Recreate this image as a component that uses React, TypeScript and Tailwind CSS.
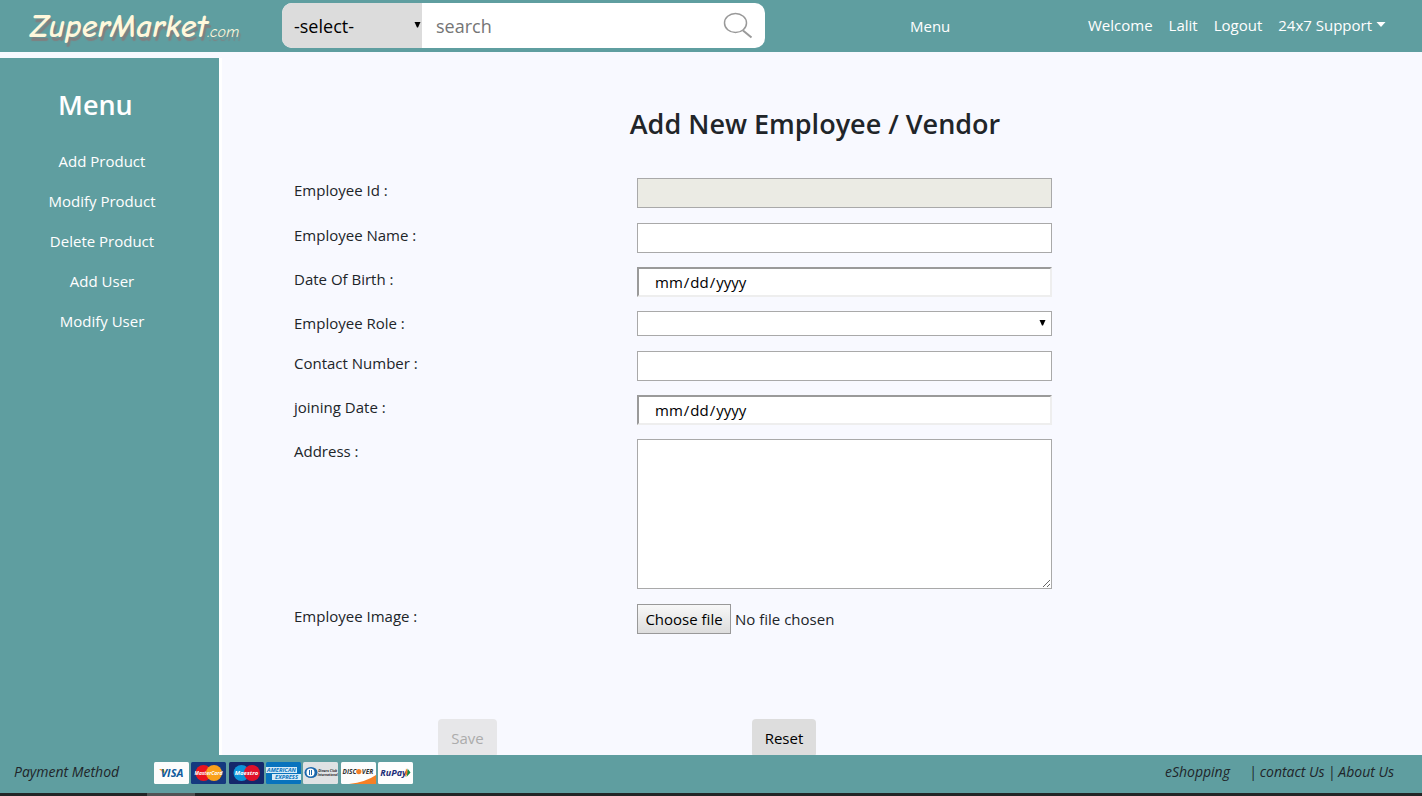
import React from "react";

const adminLinks = ["Add Product", "Modify Product", "Delete Product", "Add User", "Modify User"];
const accountLinks = ["Welcome", "Lalit", "Logout"];

const fieldBox = "w-full border border-[#a9a9a9] bg-white text-black";
const dateBox =
  "h-[30px] w-full border-2 border-t-[#9a9a9a] border-r-[#eeeeee] border-b-[#eeeeee] border-l-[#9a9a9a] bg-white pl-[15px] text-[15px] text-black [&::-webkit-calendar-picker-indicator]:hidden";

function Caret({ className }: { className: string }) {
  return (
    <svg className={className} width="7" height="6" viewBox="0 0 7 6" aria-hidden="true">
      <path d="M0.500 0h6L4 5.500H3z" fill="#000" />
    </svg>
  );
}

function Header() {
  return (
    <header className="flex h-[52px] shrink-0 items-center bg-[#5f9ea0] pr-9 pb-[2px] text-white">
      <a
        href="#"
        className="w-[282px] shrink-0 pt-2 pl-[30px] font-['Comic_Sans_MS','Comic_Neue','Lato',sans-serif] text-[32px] leading-[48px] font-bold whitespace-nowrap text-[#fff8dc] italic [text-shadow:2px_4px_1px_#808080]"
      >
        ZuperMarket<span className="text-[16px] font-normal">.com</span>
      </a>
      <form className="flex h-[45px] w-[483px] shrink-0 overflow-hidden rounded-[10px] bg-white">
        <div className="relative w-[140px]">
          <select
            aria-label="Category"
            className="h-full w-full appearance-none bg-[#dcdcdc] pt-[2px] pl-3 text-[18px] text-black"
          >
            <option>-select-</option>
          </select>
          <Caret className="pointer-events-none absolute top-[19px] right-[1px]" />
        </div>
        <input
          type="text"
          aria-label="Search products"
          placeholder="search"
          className="min-w-0 flex-1 bg-white pt-[2px] pl-[14px] text-[18px] text-black placeholder:text-[#757575]"
        />
        <button type="submit" aria-label="Search" className="flex w-[54px] items-center justify-center">
          <svg width="30" height="28" viewBox="0 0 30 28" fill="none" stroke="#999" aria-hidden="true">
            <ellipse cx="12.5" cy="12" rx="11" ry="9.5" strokeWidth="1.5" />
            <path d="M20 19.5l8.5 7" strokeWidth="2" />
          </svg>
        </button>
      </form>
      <a href="#" className="ml-[145px] pt-[2px] text-[15px]">
        Menu
      </a>
      <nav className="ml-auto flex items-center gap-4 text-[15px] whitespace-nowrap">
        {accountLinks.map((label) => (
          <a key={label} href="#">
            {label}
          </a>
        ))}
        <button type="button" className="flex items-center gap-1">
          24x7 Support
          <svg width="10" height="7" viewBox="0 0 10 7" aria-hidden="true">
            <path d="M0.500 0h9L5 5z" fill="#fff" />
          </svg>
        </button>
      </nav>
    </header>
  );
}

function Sidebar() {
  return (
    <aside className="w-[222px] shrink-0 border-r-3 border-white bg-[#5f9ea0] pt-7 text-white">
      <h2 className="pl-[58px] text-[27px] leading-[38px] font-semibold">Menu</h2>
      <nav className="mt-[17px] flex w-[204px] flex-col items-center text-[15px] leading-10">
        {adminLinks.map((label) => (
          <a key={label} href="#">
            {label}
          </a>
        ))}
      </nav>
    </aside>
  );
}

function Label({ id, children }: { id: string; children: React.ReactNode }) {
  return (
    <label htmlFor={id} className="col-start-2 text-[15px] leading-6">
      {children}
    </label>
  );
}

function EmployeeForm() {
  return (
    <main className="min-w-0 flex-1 overflow-hidden text-[#212529]">
      <h1 className="mt-12 pr-[14px] text-center text-[27px] leading-9 font-semibold">Add New Employee / Vendor</h1>
      <form>
        <div className="mt-9 grid grid-cols-[72fr_343fr_415fr_370fr] grid-rows-[45px_44px_44px_40px_44px_44px_165px_30px] items-start">
          <Label id="emp-id">Employee Id :</Label>
          <input id="emp-id" type="text" disabled className="h-[30px] w-full border border-[#a9a9a9] bg-[#ebebe4]" />
          <Label id="emp-name">Employee Name :</Label>
          <input id="emp-name" type="text" className={`h-[30px] ${fieldBox}`} />
          <Label id="emp-dob">Date Of Birth :</Label>
          <input id="emp-dob" type="date" className={dateBox} />
          <Label id="emp-role">Employee Role :</Label>
          <div className="relative">
            <select id="emp-role" className={`block h-[25px] appearance-none ${fieldBox}`}>
              <option></option>
            </select>
            <Caret className="pointer-events-none absolute top-[9px] right-[6px]" />
          </div>
          <Label id="emp-contact">Contact Number :</Label>
          <input id="emp-contact" type="text" className={`h-[30px] ${fieldBox}`} />
          <Label id="emp-joined">joining Date :</Label>
          <input id="emp-joined" type="date" className={dateBox} />
          <Label id="emp-address">Address :</Label>
          <textarea id="emp-address" className={`block h-[150px] resize ${fieldBox}`} />
          <Label id="emp-image">Employee Image :</Label>
          <div className="flex items-center text-[15px]">
            <input id="emp-image" type="file" className="sr-only" />
            <label
              htmlFor="emp-image"
              className="flex h-[30px] w-[94px] items-center justify-center border border-[#999] bg-linear-to-b from-[#f8f8f8] to-[#dddddd] whitespace-nowrap text-black"
            >
              Choose file
            </label>
            <span className="pl-1">No file chosen</span>
          </div>
        </div>
        <div className="mt-[85px] grid grid-cols-[216fr_314fr_670fr] text-[15px]">
          <button
            type="submit"
            disabled
            className="col-start-2 h-[38px] w-[59px] rounded bg-[#e7e7e9] text-[#acacac]"
          >
            Save
          </button>
          <button type="reset" className="h-[38px] w-16 rounded bg-[#dddddd] text-black">
            Reset
          </button>
        </div>
      </form>
    </main>
  );
}

function Card({ name, fill, children }: { name: string; fill: string; children: React.ReactNode }) {
  return (
    <svg
      width="35"
      height="22"
      viewBox="0 0 35 22"
      role="img"
      aria-label={name}
      className="font-['Open_Sans',sans-serif] font-bold"
      textAnchor="middle"
    >
      <rect width="35" height="22" rx="1.5" fill={fill} />
      {children}
    </svg>
  );
}

function PaymentCards() {
  return (
    <div className="flex w-[259px] justify-between pb-[2px]">
      <Card name="Visa" fill="#fcfcfc">
        <path d="M5 7h5l1 5z" fill="#f5a623" />
        <text x="18" y="15" fontSize="11" fontStyle="italic" fill="#0e5a9c">VISA</text>
      </Card>
      <Card name="MasterCard" fill="#15397f">
        <circle cx="12.5" cy="11" r="8" fill="#e9131d" />
        <circle cx="23" cy="11" r="8" fill="#f9a01b" />
        <text x="17.5" y="13" fontSize="5" fontStyle="italic" fill="#fff">MasterCard</text>
      </Card>
      <Card name="Maestro" fill="#15286b">
        <circle cx="12.5" cy="11" r="8" fill="#0c93d8" />
        <circle cx="23" cy="11" r="8" fill="#e0102a" />
        <text x="17.5" y="13" fontSize="6" fontStyle="italic" fill="#fff">Maestro</text>
      </Card>
      <Card name="American Express" fill="#0873bd">
        <rect x="0" y="5" width="31" height="6" fill="#d7ecf8" />
        <rect x="6" y="12" width="29" height="6" fill="#d7ecf8" />
        <text x="15.5" y="10.200" fontSize="5.8" fill="#0873bd">AMERICAN</text>
        <text x="20.5" y="17.200" fontSize="5.8" fill="#0873bd">EXPRESS</text>
      </Card>
      <Card name="Diners Club International" fill="#dfe2e4">
        <ellipse cx="8" cy="10.5" rx="6.5" ry="5.5" fill="#1b67ac" />
        <circle cx="7.5" cy="10.5" r="4" fill="#fff" />
        <path d="M6.5 8v5M8.5 8v5" stroke="#1b67ac" strokeWidth="1" />
        <text x="24.7" y="10" fontSize="3.5" fill="#333">Diners Club</text>
        <text x="24.7" y="13.500" fontSize="3.2" fill="#333">International</text>
      </Card>
      <Card name="Discover" fill="#fdfdfd">
        <path d="M35 13v9H8q17-2 27-9z" fill="#f58025" />
        <text x="8.500" y="12" fontSize="6.5" fill="#333">DISC</text>
        <circle cx="17.8" cy="9.600" r="2.6" fill="#f58025" />
        <text x="26.500" y="12" fontSize="6.5" fill="#333">VER</text>
      </Card>
      <Card name="RuPay" fill="#fdfdfd">
        <text x="15.500" y="14" fontSize="9" fontStyle="italic" fill="#1b2d78">RuPay</text>
        <path d="M28 6.5l3 4-4 4.500z" fill="#f47b20" />
        <path d="M29.500 6.500l3 4-4 4.500 1-4.500z" fill="#118a47" />
      </Card>
    </div>
  );
}

function Footer() {
  return (
    <footer className="shrink-0">
      <div className="flex h-[38px] items-center bg-[#5f9ea0] text-[14px] text-[#212529] italic">
        <span className="w-[154px] pb-[6px] pl-[14px]">Payment Method</span>
        <PaymentCards />
        <div className="ml-auto flex gap-[3px] pr-7 pb-[6px]">
          <a href="#" className="mr-4">
            eShopping
          </a>
          <span>|</span>
          <a href="#">contact Us</a>
          <span>|</span>
          <a href="#">About Us</a>
        </div>
      </div>
      <div className="h-[3px] bg-[#222526] pl-[147px]">
        <div className="h-full w-12 bg-[#505354]" />
      </div>
    </footer>
  );
}

export default function App() {
  return (
    <div className="flex h-screen flex-col bg-[#f8f9ff] font-['Segoe_UI','Open_Sans',sans-serif]">
      <Header />
      <div className="flex min-h-0 flex-1 pt-[6px]">
        <Sidebar />
        <EmployeeForm />
      </div>
      <Footer />
    </div>
  );
}
